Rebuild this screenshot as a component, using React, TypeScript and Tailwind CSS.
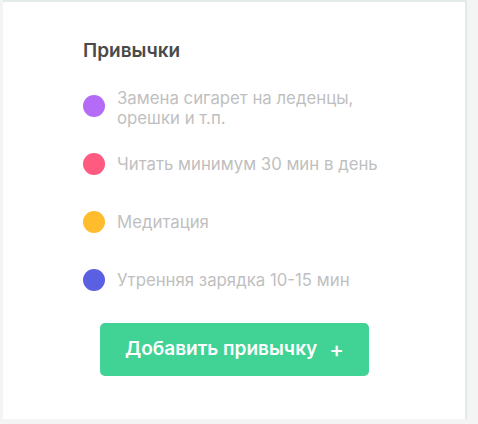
import React from "react";

const items = [
  { color: "bg-[#b46cf6]", lines: ["Замена сигарет на леденцы,", "орешки и т.п."] },
  { color: "bg-[#ff5a7f]", lines: ["Читать минимум 30 мин в день"] },
  { color: "bg-[#ffbd2e]", lines: ["Медитация"] },
  { color: "bg-[#5b5fe2]", lines: ["Утренняя зарядка 10-15 мин"] },
];

export default function App() {
  return (
    <div
      className="w-[478px] h-[424px] bg-[#f4f4f4] pl-[3px] pb-[5px] overflow-hidden"
      style={{ fontFamily: "Inter, 'Noto Sans', sans-serif" }}
    >
      <div className="w-[464px] h-[419px] bg-white border-t-2 border-r-2 border-[#e3ebe8] pt-[36px] pl-[80px]">
        <h2 className="text-[19px] font-semibold text-[#4a4a4a] leading-[26px]">Привычки</h2>
        <ul className="mt-[13px] flex flex-col">
          {items.map((it, i) => (
            <li key={i} className="h-[58px] flex items-center gap-[12px]">
              <span className={`w-[22px] h-[22px] rounded-full shrink-0 ${it.color}`} />
              <span
                className={`flex flex-col whitespace-nowrap text-[16.8px] leading-[20px] text-[#bfbfbf] ${it.lines.length > 1 ? "mt-[4px]" : ""}`}
              >
                {it.lines.map((l, j) => (
                  <span key={j}>{l}</span>
                ))}
              </span>
            </li>
          ))}
        </ul>
        <button className="mt-[14px] ml-[17px] w-[269px] h-[53px] rounded-[5px] bg-[#41d395] text-white text-[19px] font-semibold flex items-center justify-center gap-[12px]">
          <span>Добавить привычку</span>
          <span className="text-[22px] font-medium leading-none -mt-[2px]">+</span>
        </button>
      </div>
    </div>
  );
}
